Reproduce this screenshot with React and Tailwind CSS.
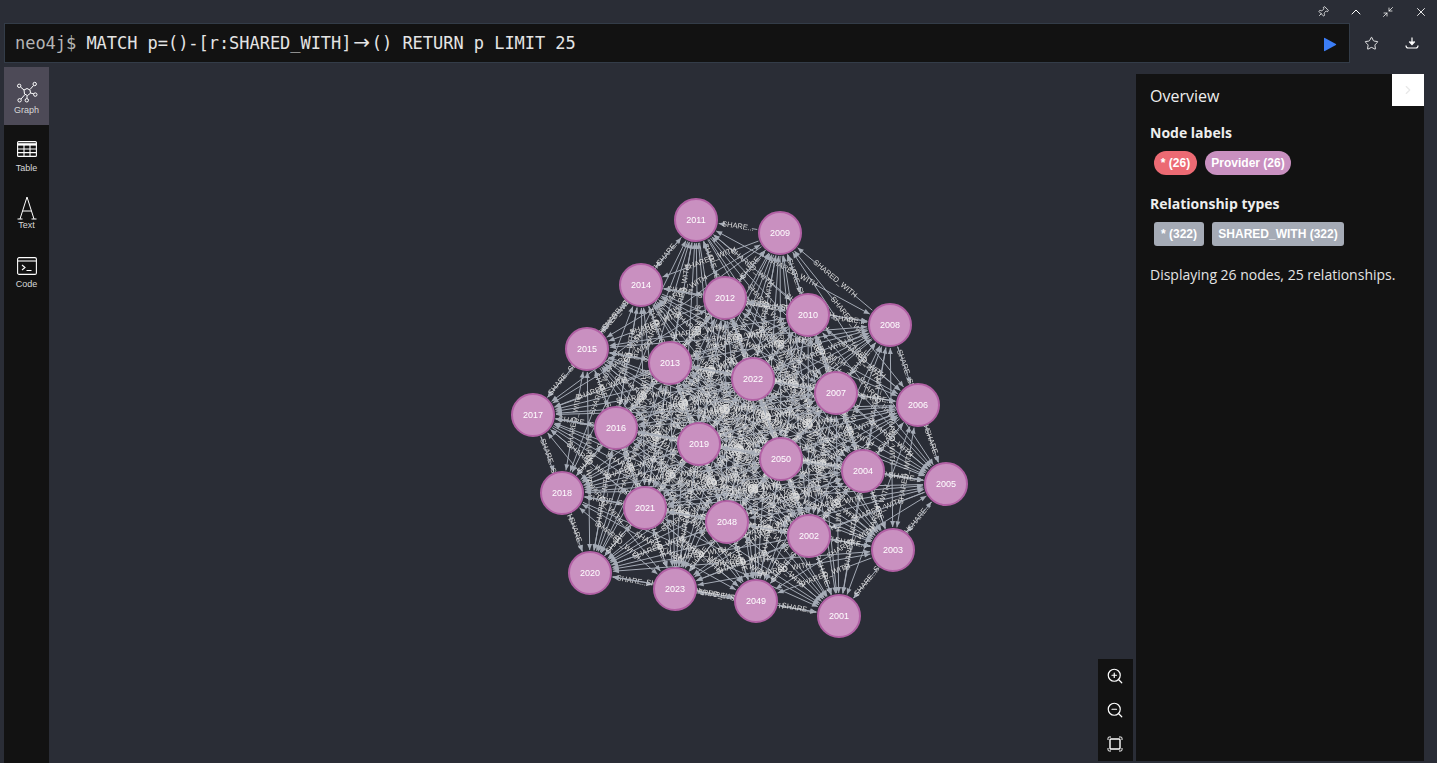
import React from "react";
import { Pin, ChevronUp, Minimize2, X, Star, ZoomIn, ZoomOut, ChevronRight } from "lucide-react";

const NODES = [
  ["2011", 696, 220], ["2009", 780, 233], ["2014", 641, 285], ["2012", 725, 298], ["2010", 808, 315], ["2008", 890, 325],
  ["2015", 587, 349], ["2013", 670, 363], ["2022", 753, 379], ["2007", 836, 393], ["2006", 918, 405], ["2017", 533, 415],
  ["2016", 616, 428], ["2019", 699, 444], ["2050", 781, 459], ["2004", 863, 471], ["2005", 946, 484], ["2018", 562, 493],
  ["2021", 645, 508], ["2048", 727, 522], ["2002", 809, 536], ["2003", 893, 550], ["2020", 590, 573], ["2023", 675, 589],
  ["2049", 756, 601], ["2001", 839, 616],
];

const R = 21;
const OX = 49;
const OY = 67;

// which way a rim edge points, as read off the picture
const ONE_WAY = {
  "2009>2011": 1, "2008>2009": 1, "2020>2023": 1, "2049>2001": 1, "2011>2014": 1, "2014>2015": 1, "2015>2017": 1,
  "2017>2018": 1, "2018>2020": 1, "2008>2006": 1, "2006>2005": 1, "2005>2003": 1, "2003>2001": 1,
};

function buildEdges() {
  const edges = [];
  NODES.forEach((a, i) => {
    NODES.forEach((b, j) => {
      if (j <= i) return;
      const len = Math.hypot(b[1] - a[1], b[2] - a[2]);
      const fw = ONE_WAY[`${a[0]}>${b[0]}`];
      const bw = ONE_WAY[`${b[0]}>${a[0]}`];
      edges.push({ a, b, len, fw, bw, both: !fw && !bw && (i * 7 + j * 13) % 3 !== 0 });
    });
  });
  return edges;
}

function Edge({ a, b, len, fw, bw, both }) {
  const dx = (b[1] - a[1]) / len;
  const dy = (b[2] - a[2]) / len;
  const x1 = a[1] + dx * (R + 2);
  const y1 = a[2] + dy * (R + 2);
  const x2 = b[1] - dx * (R + 2);
  const y2 = b[2] - dy * (R + 2);
  const mx = (x1 + x2) / 2;
  const my = (y1 + y2) / 2;
  const room = len - 2 * R;
  const label = room > 62 ? "SHARED_WITH" : "SHARE...";
  const gap = room > 62 ? 24 : 14;
  let deg = (Math.atan2(dy, dx) * 180) / Math.PI;
  if (deg > 90) deg -= 180;
  if (deg < -90) deg += 180;
  const toB = fw || both || (!bw && !both);
  const toA = bw || both;
  const head = (x, y, ux, uy) =>
    `${x},${y} ${x - ux * 6 - uy * 2.5},${y - uy * 6 + ux * 2.5} ${x - ux * 6 + uy * 2.5},${y - uy * 6 - ux * 2.5}`;
  return (
    <g>
      <line x1={x1} y1={y1} x2={mx - dx * gap} y2={my - dy * gap} stroke="#A5ABB6" strokeWidth="1" />
      <line x1={mx + dx * gap} y1={my + dy * gap} x2={x2} y2={y2} stroke="#A5ABB6" strokeWidth="1" />
      {toB && <polygon points={head(x2, y2, dx, dy)} fill="#A5ABB6" />}
      {toA && <polygon points={head(x1, y1, -dx, -dy)} fill="#A5ABB6" />}
      <text
        x={mx}
        y={my}
        textAnchor="middle"
        dominantBaseline="middle"
        fontSize="7.5"
        fill="#dddddd"
        fontFamily="'Liberation Sans', sans-serif"
        transform={`rotate(${deg} ${mx} ${my})`}
      >
        {label}
      </text>
    </g>
  );
}

function GraphView() {
  const edges = buildEdges();
  return (
    <svg className="absolute inset-0 w-full h-full will-change-transform" viewBox={`${OX} ${OY} 1087 696`}>
      {edges.map((e) => (
        <Edge key={e.a[0] + e.b[0]} {...e} />
      ))}
      {NODES.map(([name, x, y]) => (
        <g key={name}>
          <circle cx={x} cy={y} r={R} fill="#C990C0" stroke="#B261A5" strokeWidth="2" />
          <text
            x={x}
            y={y + 1}
            textAnchor="middle"
            dominantBaseline="middle"
            fontSize="9"
            fill="#fff"
            fontFamily="'Liberation Sans', sans-serif"
          >
            {name}
          </text>
        </g>
      ))}
    </svg>
  );
}

function GraphIcon() {
  return (
    <svg width="22" height="22" viewBox="0 0 22 22" fill="none" stroke="#fff" strokeWidth="1">
      <path d="M8 9l3-1.5L14 9l.5 3.2L11.5 14.5 8.5 13z" />
      <path d="M8 9L4.5 6M14 8.5l3.5-4M14.5 12l3.5 1M9 13.5l-4 4.5M11 14.5l0 3" />
      <circle cx="3.2" cy="4.8" r="1.7" />
      <circle cx="18.7" cy="3" r="1.7" />
      <circle cx="19.3" cy="13.6" r="1.7" />
      <circle cx="3.6" cy="19.3" r="1.7" />
      <circle cx="10.8" cy="19.3" r="1.7" />
    </svg>
  );
}

function TableIcon() {
  return (
    <svg width="20" height="16" viewBox="0 0 20 16" fill="none" stroke="#fff" strokeWidth="1.1">
      <rect x="0.6" y="0.6" width="18.8" height="14.8" rx="1" />
      <path d="M0.6 3.4h18.8" strokeWidth="2.4" />
      <path d="M0.6 8h18.8M0.6 11.6h18.8M7 3v12.4M13 3v12.4" />
    </svg>
  );
}

function TextIcon() {
  return (
    <svg width="20" height="24" viewBox="0 0 20 24" fill="none" stroke="#fff" strokeWidth="1">
      <path d="M0.5 23h5M14.5 23h5M3 23L10 1l7 22M5.5 15h9" />
    </svg>
  );
}

function CodeIcon() {
  return (
    <svg width="20" height="18" viewBox="0 0 20 18" fill="none" stroke="#fff" strokeWidth="1.1">
      <rect x="0.6" y="0.6" width="18.8" height="16.8" rx="1.5" />
      <path d="M0.6 4h18.8" />
      <path d="M5 8l3 2.5L5 13M9.5 13.5h5" />
    </svg>
  );
}

function FitIcon() {
  return (
    <svg width="16" height="16" viewBox="0 0 16 16" fill="none" stroke="#fff">
      <rect x="3" y="3" width="10" height="10" rx="1" strokeWidth="1.4" />
      <path d="M1 4V2.2Q1 1 2.2 1H4M12 1h1.8Q15 1 15 2.2V4M15 12v1.8q0 1.2-1.2 1.2H12M4 15H2.2Q1 15 1 13.8V12" strokeWidth="1" />
    </svg>
  );
}

function DownloadIcon() {
  return (
    <svg width="14" height="14" viewBox="0 0 14 14" fill="none" stroke="#fff" strokeWidth="1.2">
      <path d="M7 1.5v6.5" />
      <path d="M4.2 5.6L7 8.6l2.8-3" fill="#fff" />
      <path d="M1 9.5c0 1.6 1 2.5 2.2 2.5h7.6c1.2 0 2.2-.9 2.2-2.5" />
    </svg>
  );
}

function NavItem({ label, active, iconBox, children }) {
  return (
    <div className={`h-[58px] flex flex-col items-center ${active ? "bg-[#4d4a57]" : ""}`}>
      <div className={`${iconBox} w-full flex items-end justify-center`}>{children}</div>
      <span className="text-[9px] leading-[11px] text-[#d8d8d8]">{label}</span>
    </div>
  );
}

function Badge({ color, round, size, children }) {
  return (
    <span className={`h-6 ${size} flex items-center justify-center text-xs font-bold text-white ${color} ${round ? "rounded-full" : "rounded-[3px]"}`}>
      {children}
    </span>
  );
}

export default function App() {
  return (
    <div className="h-screen w-full overflow-hidden bg-[#2a2d36] font-['Liberation_Sans',sans-serif] text-white flex flex-col">
      {/* window buttons */}
      <div className="h-[23px] flex items-center justify-end">
        <Pin className="w-3 h-3 rotate-45 text-white mr-[19px]" strokeWidth={1.5} />
        <ChevronUp className="w-4 h-4 text-white mr-[18px]" strokeWidth={1.5} />
        <Minimize2 className="w-3 h-3 text-white mr-[20px]" strokeWidth={1.5} />
        <X className="w-[14px] h-[14px] text-white mr-[9px]" strokeWidth={1.5} />
      </div>

      {/* editor */}
      <div className="h-10 ml-1 flex items-center">
        <div className="w-[1346px] h-10 flex items-center justify-between bg-[#121212] border border-[#333c48] pl-[10px] pr-3 font-['DejaVu_Sans_Mono',monospace] text-[17px] tracking-[-0.04px] whitespace-pre">
          <div className="pt-[2px]">
            <span className="text-[#b5b5b5]">neo4j$ </span>
            <span className="text-[#e4e4e4]">
              MATCH p=()-[r:SHARED_WITH]
              <span className="inline-block w-[20.4px] text-center font-['DejaVu_Sans',sans-serif] text-[20px] leading-none">→</span>
              () RETURN p LIMIT 25
            </span>
          </div>
          <svg width="14" height="15" viewBox="0 0 14 15" className="mt-[3px]">
            <path d="M1 1.5v12a.6.6 0 0 0 .9.5l11-6a.6.6 0 0 0 0-1l-11-6a.6.6 0 0 0-.9.5z" fill="#3b7df6" />
          </svg>
        </div>
        <Star className="w-[15px] h-[15px] ml-[14px] text-white" strokeWidth={1.4} />
        <div className="ml-[26px]">
          <DownloadIcon />
        </div>
      </div>

      {/* body */}
      <div className="flex-1 min-h-0 flex pt-[4px] pl-1">
        <div className="w-[45px] bg-[#121212]">
          <NavItem label="Graph" active iconBox="h-[38px] pb-[2px]">
            <GraphIcon />
          </NavItem>
          <NavItem label="Table" iconBox="h-[38px] pb-[6px]">
            <TableIcon />
          </NavItem>
          <NavItem label="Text" iconBox="h-[37px]">
            <TextIcon />
          </NavItem>
          <NavItem label="Code" iconBox="h-[38px] pb-[4px]">
            <CodeIcon />
          </NavItem>
        </div>

        <div className="relative w-[1087px]">
          <GraphView />
          <div className="absolute right-[3px] bottom-[2px] w-[35px] h-[102px] bg-[#121212] flex flex-col items-center justify-between pt-[8px] pb-[9px] pr-[1px]">
            <ZoomIn className="w-[18px] h-[18px] text-white" strokeWidth={1.6} />
            <ZoomOut className="w-[18px] h-[18px] text-white -translate-y-px" strokeWidth={1.6} />
            <FitIcon />
          </div>
        </div>

        <div className="relative w-[288px] mt-[7px] mb-[2px] bg-[#121212] pl-[14px] font-['Open_Sans',sans-serif]">
          <div className="absolute right-0 top-0 w-8 h-8 bg-white flex items-center justify-center">
            <ChevronRight className="w-[14px] h-[14px] text-[#e8e8e8]" />
          </div>
          <div className="mt-[11px] text-base leading-[22px] text-[#eeeeee]">Overview</div>
          <div className="mt-[16px] text-sm leading-5 font-bold text-[#eeeeee]">Node labels</div>
          <div className="mt-2 ml-1 flex gap-2 font-['Liberation_Sans',sans-serif]">
            <Badge color="bg-[#ec6a73]" size="w-[43px]" round>* (26)</Badge>
            <Badge color="bg-[#c990c0]" size="w-[86px]" round>Provider (26)</Badge>
          </div>
          <div className="mt-[19px] text-sm leading-5 font-bold text-[#eeeeee]">Relationship types</div>
          <div className="mt-2 ml-1 flex gap-2 font-['Liberation_Sans',sans-serif]">
            <Badge color="bg-[#a5abb6]" size="w-[50px]">* (322)</Badge>
            <Badge color="bg-[#a5abb6]" size="w-[132px]">SHARED_WITH (322)</Badge>
          </div>
          <div className="mt-[19px] text-sm leading-5 text-[#e4e4e4]">Displaying 26 nodes, 25 relationships.</div>
        </div>
      </div>
    </div>
  );
}
